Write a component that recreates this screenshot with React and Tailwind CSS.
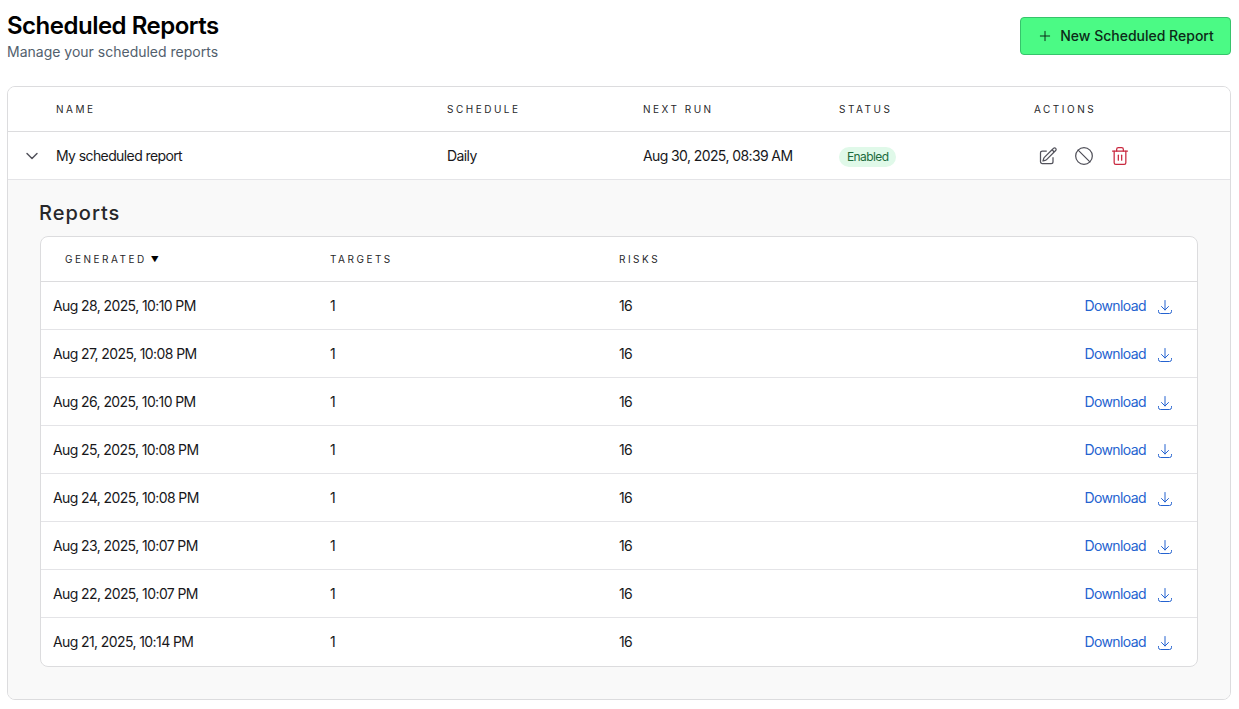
import { Plus, ChevronDown, Ban, Trash2 } from 'lucide-react';

const reports = [
  'Aug 28, 2025, 10:10 PM',
  'Aug 27, 2025, 10:08 PM',
  'Aug 26, 2025, 10:10 PM',
  'Aug 25, 2025, 10:08 PM',
  'Aug 24, 2025, 10:08 PM',
  'Aug 23, 2025, 10:07 PM',
  'Aug 22, 2025, 10:07 PM',
  'Aug 21, 2025, 10:14 PM',
];

const headLabel = 'text-[10px] leading-[14px] font-normal tracking-[0.25em] text-[#27272a]';

const EditIcon = () => (
  <svg width="20" height="20" viewBox="0 0 24 24" fill="none" stroke="currentColor" strokeWidth="1.5" strokeLinecap="round" strokeLinejoin="round" className="text-[#52525b]">
    <path d="m16.862 4.487 1.687-1.688a1.875 1.875 0 1 1 2.652 2.652L10.582 16.07a4.5 4.5 0 0 1-1.897 1.13L6 18l.8-2.685a4.5 4.5 0 0 1 1.13-1.897l8.932-8.931Zm0 0L19.5 7.125M18 14v4.75A2.25 2.25 0 0 1 15.75 21H5.25A2.25 2.25 0 0 1 3 18.75V8.25A2.25 2.25 0 0 1 5.25 6H10" />
  </svg>
);

const DownloadIcon = () => (
  <svg width="16" height="16" viewBox="0 0 16 16" fill="none" stroke="currentColor" strokeWidth="1" strokeLinecap="round" strokeLinejoin="round" className="mt-[2px]">
    <path d="M8 1.5v9.5M4.5 7.5 8 11l3.5-3.5M1.5 11.5v1a2 2 0 0 0 2 2h9a2 2 0 0 0 2-2v-1" />
  </svg>
);

const App = () => {
  return (
    <div className="min-h-[709px] bg-white pl-[7px] pr-[8px] pt-[12px] font-['Inter',sans-serif] text-[#18181b]">
      {/* Page header */}
      <div className="flex items-start justify-between">
        <div>
          <h1 className="text-2xl leading-[28px] font-semibold tracking-[-0.5px] text-black">Scheduled Reports</h1>
          <p className="mt-[2px] text-sm leading-[20px] text-[#52606d]">Manage your scheduled reports</p>
        </div>
        <button className="mt-[5px] flex h-[38px] w-[211px] items-center justify-center gap-[7px] rounded border border-[#36c46b] bg-[#4bfa85] text-sm font-medium text-[#0c2a18]">
          <Plus size={16} strokeWidth={1.5} />
          New Scheduled Report
        </button>
      </div>

      {/* Schedules table */}
      <div className="mt-[24px] overflow-hidden rounded-lg border border-[#dcdcde]">
        <div className="grid h-[45px] grid-cols-[439px_196px_196px_195px_1fr] items-center border-b border-[#dcdcde] bg-white">
          <div className={`pl-[48px] ${headLabel}`}>NAME</div>
          <div className={headLabel}>SCHEDULE</div>
          <div className={headLabel}>NEXT RUN</div>
          <div className={headLabel}>STATUS</div>
          <div className={headLabel}>ACTIONS</div>
        </div>

        <div className="grid h-[48px] grid-cols-[439px_196px_196px_195px_1fr] items-center border-b border-[#e4e4e7] bg-white text-sm tracking-[-0.6px]">
          <div className="flex items-center">
            <ChevronDown size={20} strokeWidth={1.75} className="ml-[14px] mr-[14px] text-[#52525b]" />
            <span>My scheduled report</span>
          </div>
          <div>Daily</div>
          <div>Aug 30, 2025, 08:39 AM</div>
          <div className="flex pt-[2px]">
            <span className="rounded-full bg-[#e0f9e9] px-2 text-xs leading-[20px] text-[#1c6b3c]">Enabled</span>
          </div>
          <div className="flex items-center gap-[16px] pl-[4px]">
            <EditIcon />
            <Ban size={20} strokeWidth={1.5} className="text-[#52525b]" />
            <Trash2 size={20} strokeWidth={1.5} className="text-[#c9283f]" />
          </div>
        </div>

        <div className="bg-[#f9f9f9] px-[32px] pt-[19px] pb-[32px]">
          <h2 className="-ml-[1px] text-xl leading-[28px] font-medium tracking-[1px] text-[#27272a]">Reports</h2>
          <div className="mt-[9px] overflow-hidden rounded-lg border border-[#dcdcde] bg-white">
            <div className="grid h-[45px] grid-cols-[289px_289px_1fr_auto] items-center border-b border-[#dcdcde]">
              <div className={`flex items-center gap-[4px] pl-[24px] ${headLabel}`}>
                GENERATED
                <span className="text-[8px] leading-[10px] tracking-normal text-black">▼</span>
              </div>
              <div className={headLabel}>TARGETS</div>
              <div className={headLabel}>RISKS</div>
            </div>
            {reports.map((date, index) => (
              <div
                key={index}
                className={`grid h-[48px] grid-cols-[289px_289px_1fr_auto] items-center text-sm tracking-[-0.6px] ${index < reports.length - 1 ? 'border-b border-[#e4e4e7]' : ''}`}
              >
                <div className="pl-[12px]">{date}</div>
                <div>1</div>
                <div>16</div>
                <div className="flex items-center gap-[11px] pr-[24px] text-[#2563d0]">
                  Download
                  <DownloadIcon />
                </div>
              </div>
            ))}
          </div>
        </div>
      </div>
    </div>
  );
};

export default App;
